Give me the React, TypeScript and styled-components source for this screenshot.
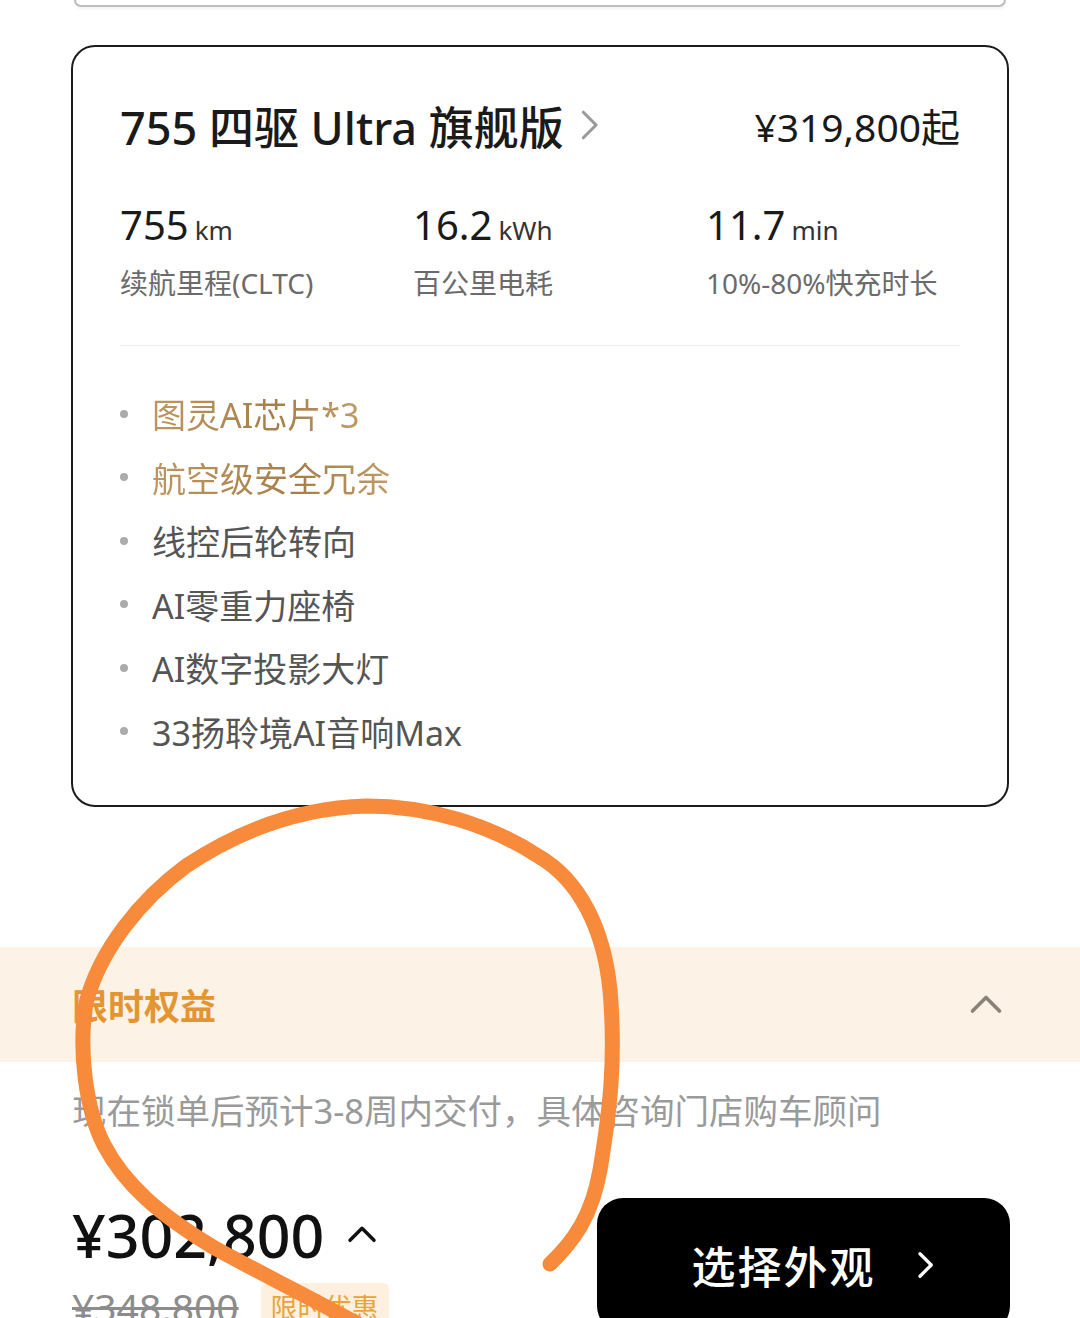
import React from "react";
import styled, { createGlobalStyle } from "styled-components";

const GlobalStyle = createGlobalStyle`
  html, body {
    margin: 0;
    padding: 0;
    background: #ffffff;
    overflow: hidden;
  }
  body {
    font-family: "Noto Sans", "Noto Sans CJK SC", sans-serif;
    color: #1a1a1a;
  }
`;

// 规格与配置数据
const specs = [
  { value: "755", unit: "km", label: "续航里程(CLTC)" },
  { value: "16.2", unit: "kWh", label: "百公里电耗" },
  { value: "11.7", unit: "min", label: "10%-80%快充时长" },
];

const features = [
  { text: "图灵AI芯片*3", gold: true },
  { text: "航空级安全冗余", gold: true },
  { text: "线控后轮转向", gold: false },
  { text: "AI零重力座椅", gold: false },
  { text: "AI数字投影大灯", gold: false },
  { text: "33扬聆境AI音响Max", gold: false },
];

const Page = styled.div`
  position: relative;
  width: 1080px;
  height: 1318px;
  overflow: hidden;
  background: #fff;
`;

const PrevCard = styled.div`
  height: 5px;
  margin: 0 74px 0 74px;
  border: 2.5px solid #bdbdbd;
  border-top: none;
  border-radius: 0 0 22px 22px;
  box-shadow: 0 2px 3px rgba(0, 0, 0, 0.05);
`;

const Card = styled.div`
  margin: 38px 71px 0 71px;
  border: 2.5px solid #1c1c1c;
  border-radius: 24px;
  padding: 48px 47px 42px 47px;
`;

const CardHead = styled.div`
  display: flex;
  align-items: center;
  justify-content: space-between;
  height: 60px;
`;

const Title = styled.div`
  display: flex;
  align-items: center;
  gap: 8px;
  font-size: 45px;
  font-weight: 500;
  color: #1a1a1a;
`;

const StartPrice = styled.div`
  font-size: 39px;
  color: #1a1a1a;
`;

const SpecRow = styled.div`
  display: grid;
  grid-template-columns: 293px 293px 1fr;
  margin-top: 45px;
`;

const SpecValue = styled.div`
  height: 50px;
  line-height: 50px;
  font-size: 40px;
  color: #1a1a1a;
`;

const SpecUnit = styled.span`
  font-size: 26px;
  margin-left: 6px;
  color: #333;
`;

const SpecLabel = styled.div`
  margin-top: 13px;
  height: 40px;
  line-height: 40px;
  font-size: 28px;
  color: #6b6b6b;
`;

const Divider = styled.div`
  height: 1px;
  background: #ececec;
  margin-top: 42px;
`;

const FeatureList = styled.ul`
  list-style: none;
  margin: 36px 0 0 0;
  padding: 0;
`;

const FeatureItem = styled.li<{ $gold: boolean }>`
  display: flex;
  align-items: center;
  height: 63.5px;
  font-size: 34px;
  color: #555;

  &::before {
    content: "";
    width: 8px;
    height: 8px;
    border-radius: 50%;
    background: #ababab;
    margin: 0 24px 0 0;
  }

  span {
    ${(p) =>
      p.$gold
        ? `
      background: linear-gradient(90deg, #bf9660 0%, #a57f4a 60%, #c09a66 100%);
      -webkit-background-clip: text;
      background-clip: text;
      color: transparent;
    `
        : ""}
  }
`;

const Band = styled.div`
  margin-top: 140px;
  height: 115px;
  background: #fdf2e6;
  display: flex;
  align-items: center;
  justify-content: space-between;
  padding: 0 76px 0 72px;
`;

const BandTitle = styled.div`
  font-size: 36px;
  font-weight: 700;
  color: #e39532;
`;

const Note = styled.div`
  margin: 25px 0 0 72px;
  height: 48px;
  line-height: 48px;
  font-size: 34.5px;
  color: #9a9a9a;
`;

const BuyRow = styled.div`
  display: flex;
  justify-content: space-between;
  align-items: flex-start;
  margin: 63px 70px 0 72px;
`;

const PriceBox = styled.div`
  padding-top: 2px;
`;

const Price = styled.div`
  display: flex;
  align-items: center;
  gap: 22px;
  height: 70px;
  font-size: 59px;
  font-weight: 500;
  color: #111;
`;

const OldRow = styled.div`
  display: flex;
  align-items: center;
  gap: 22px;
  margin-top: 10px;
`;

const OldPrice = styled.div`
  font-size: 39px;
  color: #8c8c8c;
  text-decoration: line-through;
  text-decoration-thickness: 3px;
`;

const Badge = styled.div`
  background: #fdf0de;
  color: #e8a43a;
  font-size: 27px;
  padding: 4px 10px;
  border-radius: 6px;
`;

const ActionButton = styled.button`
  width: 413px;
  height: 134px;
  border: none;
  border-radius: 26px;
  background: #000;
  color: #fff;
  font-family: "Noto Sans CJK SC", sans-serif;
  font-size: 44px;
  font-weight: 500;
  letter-spacing: 2px;
  display: flex;
  align-items: center;
  justify-content: center;
  gap: 34px;
  padding: 0 0 0 24px;
`;

const Scribble = styled.svg`
  position: absolute;
  left: 0;
  top: 0;
  pointer-events: none;
`;

const Chevron = ({ dir, size, color, width }: { dir: "right" | "up"; size: number; color: string; width: number }) => (
  <svg width={size} height={size} viewBox="0 0 24 24" fill="none">
    <path
      d={dir === "right" ? "M8 3 L17 12 L8 21" : "M3 16 L12 7 L21 16"}
      stroke={color}
      strokeWidth={width}
      strokeLinecap="round"
      strokeLinejoin="round"
    />
  </svg>
);

export default function App() {
  return (
    <Page>
      <GlobalStyle />
      <PrevCard />
      <Card>
        <CardHead>
          <Title>
            755 四驱 Ultra 旗舰版
            <Chevron dir="right" size={34} color="#9a9a9a" width={2.2} />
          </Title>
          <StartPrice>¥319,800起</StartPrice>
        </CardHead>
        <SpecRow>
          {specs.map((s) => (
            <div key={s.label}>
              <SpecValue>
                {s.value}
                <SpecUnit>{s.unit}</SpecUnit>
              </SpecValue>
              <SpecLabel>{s.label}</SpecLabel>
            </div>
          ))}
        </SpecRow>
        <Divider />
        <FeatureList>
          {features.map((f) => (
            <FeatureItem key={f.text} $gold={f.gold}>
              <span>{f.text}</span>
            </FeatureItem>
          ))}
        </FeatureList>
      </Card>

      <Band>
        <BandTitle>限时权益</BandTitle>
        <Chevron dir="up" size={36} color="#8a8178" width={2.4} />
      </Band>
      <Note>现在锁单后预计3-8周内交付，具体咨询门店购车顾问</Note>

      <BuyRow>
        <PriceBox>
          <Price>
            ¥302,800
            <Chevron dir="up" size={32} color="#111" width={2.6} />
          </Price>
          <OldRow>
            <OldPrice>¥348,800</OldPrice>
            <Badge>限时优惠</Badge>
          </OldRow>
        </PriceBox>
        <ActionButton>
          选择外观
          <Chevron dir="right" size={30} color="#fff" width={2.6} />
        </ActionButton>
      </BuyRow>

      {/* 手绘圈注 */}
      <Scribble width="1080" height="1318" viewBox="0 0 1080 1318">
        <path
          d="M550 1264 C 575 1240, 592 1215, 600 1170 C 610 1110, 616 1060, 610 990 C 604 930, 580 880, 538 856 C 490 825, 430 806, 366 806 C 300 808, 240 830, 186 866 C 140 900, 100 950, 86 1003 C 78 1050, 86 1110, 104 1145 C 125 1185, 160 1215, 213 1247 C 250 1268, 300 1292, 360 1325"
          stroke="#f78a3b"
          strokeWidth={15}
          fill="none"
          strokeLinecap="round"
          strokeLinejoin="round"
        />
      </Scribble>
    </Page>
  );
}
